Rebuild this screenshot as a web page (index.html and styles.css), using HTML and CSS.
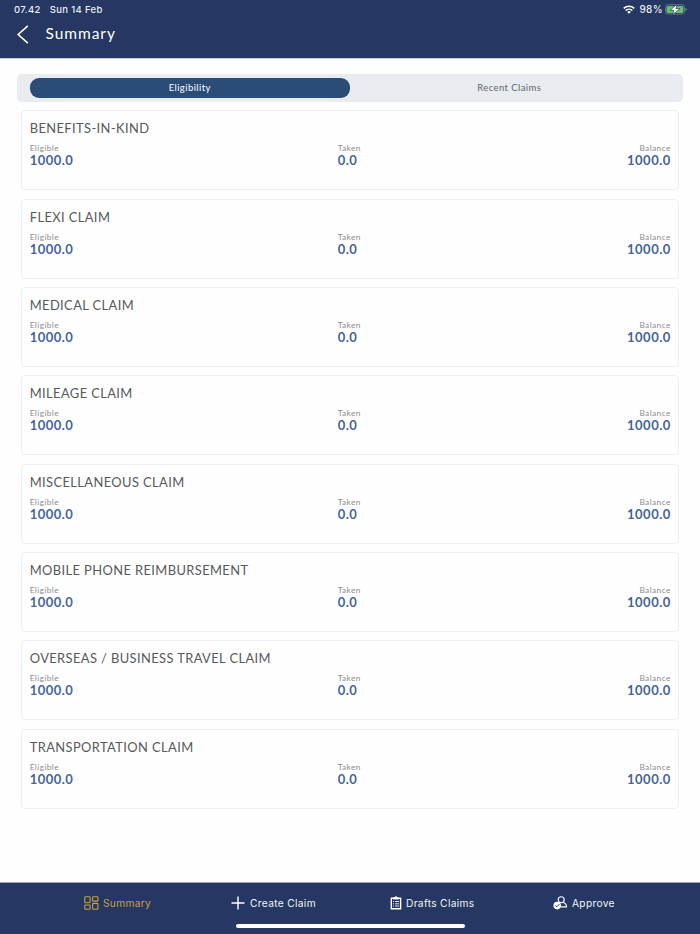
FILE: index.html
```html
<!DOCTYPE html>
<html lang="en">
<head>
<meta charset="utf-8">
<title>Summary</title>
<link rel="stylesheet" href="styles.css">
</head>
<body>
<div class="app">
  <header class="header">
    <div class="status">
      <span class="time">07.42</span><span class="date">Sun 14 Feb</span>
      <svg class="wifi" viewBox="0 0 12 9" width="12" height="9"><g fill="none" stroke="#fff" stroke-width="1.6"><path d="M.7 3.4a7.6 7.6 0 0 1 10.6 0"/><path d="M2.7 5.6a4.7 4.7 0 0 1 6.6 0"/></g><path d="M6 8.8 4.2 7a2.5 2.5 0 0 1 3.6 0z" fill="#fff"/></svg>
      <span class="percent">98%</span>
      <svg class="battery" viewBox="0 0 22 11" width="22" height="11"><rect x=".5" y=".7" width="19" height="9.4" rx="2.7" fill="none" stroke="#6b7894"/><rect x="1.6" y="1.9" width="16.8" height="7" rx="1.6" fill="#62c466"/><path d="M20.6 4v3q1-.4 1-1.5T20.6 4z" fill="#8c97af"/><path d="M12 .2 5 6.3h3.8L7.6 10.8 15 4.7h-3.8z" fill="#fff" stroke="#253762" stroke-width=".7"/></svg>
    </div>
    <div class="titlebar">
      <svg class="back" viewBox="0 0 12 19" width="12" height="19"><path d="M10.8.9 1.2 9.5l9.6 8.6" fill="none" stroke="#fff" stroke-width="1.6"/></svg>
      <h1>Summary</h1>
    </div>
  </header>
  <main class="content">
    <div class="tabs"><div class="tab active">Eligibility</div><div class="tab">Recent Claims</div></div>
    <div class="cards">
      <section class="card"><h2>BENEFITS-IN-KIND</h2><div class="figures"><div><small>Eligible</small><b>1000.0</b></div><div><small>Taken</small><b>0.0</b></div><div class="right"><small>Balance</small><b>1000.0</b></div></div></section>
      <section class="card"><h2>FLEXI CLAIM</h2><div class="figures"><div><small>Eligible</small><b>1000.0</b></div><div><small>Taken</small><b>0.0</b></div><div class="right"><small>Balance</small><b>1000.0</b></div></div></section>
      <section class="card"><h2>MEDICAL CLAIM</h2><div class="figures"><div><small>Eligible</small><b>1000.0</b></div><div><small>Taken</small><b>0.0</b></div><div class="right"><small>Balance</small><b>1000.0</b></div></div></section>
      <section class="card"><h2>MILEAGE CLAIM</h2><div class="figures"><div><small>Eligible</small><b>1000.0</b></div><div><small>Taken</small><b>0.0</b></div><div class="right"><small>Balance</small><b>1000.0</b></div></div></section>
      <section class="card"><h2>MISCELLANEOUS CLAIM</h2><div class="figures"><div><small>Eligible</small><b>1000.0</b></div><div><small>Taken</small><b>0.0</b></div><div class="right"><small>Balance</small><b>1000.0</b></div></div></section>
      <section class="card"><h2>MOBILE PHONE REIMBURSEMENT</h2><div class="figures"><div><small>Eligible</small><b>1000.0</b></div><div><small>Taken</small><b>0.0</b></div><div class="right"><small>Balance</small><b>1000.0</b></div></div></section>
      <section class="card"><h2>OVERSEAS / BUSINESS TRAVEL CLAIM</h2><div class="figures"><div><small>Eligible</small><b>1000.0</b></div><div><small>Taken</small><b>0.0</b></div><div class="right"><small>Balance</small><b>1000.0</b></div></div></section>
      <section class="card"><h2>TRANSPORTATION CLAIM</h2><div class="figures"><div><small>Eligible</small><b>1000.0</b></div><div><small>Taken</small><b>0.0</b></div><div class="right"><small>Balance</small><b>1000.0</b></div></div></section>
    </div>
  </main>
  <nav class="nav">
    <a class="item summary"><svg viewBox="0 0 15 14" width="15" height="14"><g fill="none" stroke="#c9a03d" stroke-width="1.1"><rect x=".8" y=".7" width="5.3" height="6" rx=".7"/><rect x="8.6" y=".7" width="5.3" height="4.4" rx=".7"/><rect x=".8" y="9" width="5.3" height="4.2" rx=".7"/><rect x="8.6" y="7.4" width="5.3" height="5.8" rx=".7"/></g></svg><span>Summary</span></a>
    <a class="item create"><svg viewBox="0 0 14 14" width="14" height="14"><path d="M7 .5v13M.5 7h13" stroke="#fff" stroke-width="1.4"/></svg><span>Create Claim</span></a>
    <a class="item drafts"><svg viewBox="0 0 12 14" width="12" height="14"><path d="M1.3 2.3h9.3v10.5H1.3z" fill="none" stroke="#fff" stroke-width="1.4"/><path d="M3.4 1.3h1.3a1.3 1.3 0 0 1 2.5 0h1.3v2.2H3.4z" fill="#fff"/><path d="M3 5.5h1M5 5.5h3.9M3 7.8h1M5 7.8h3.9M3 10h1M5 10h3.9" stroke="#dfe3eb"/></svg><span>Drafts Claims</span></a>
    <a class="item approve"><svg viewBox="0 0 15 14" width="15" height="14"><g fill="none" stroke="#fff" stroke-width="1.1"><circle cx="8.2" cy="3.8" r="3"/><path d="M5.2 7.2 3.7 8M10.2 6.4c2.2.7 3.3 2.2 3.4 4.5H8"/></g><circle cx="4.2" cy="9.6" r="3.8" fill="#fff"/><path d="m2.2 9.4 1.5 1.5 2.7-2.8" fill="none" stroke="#253762" stroke-width="1"/></svg><span>Approve</span></a>
    <div class="home"></div>
  </nav>
</div>
</body>
</html>
```
FILE: styles.css
```css
* { box-sizing: border-box; }
body { margin: 0; font-family: Lato, sans-serif; background: #253762; }
.app { width: 700px; height: 934px; display: flex; flex-direction: column; overflow: hidden; }
.header { height: 58px; background: #253762; color: #fff; }
.status { display: flex; align-items: center; height: 19px; padding: 0 13px 0 14px; font: 500 9.5px/19px Inter, sans-serif; letter-spacing: .33px; color: #e9ecf2; }
.date { margin-left: 9px; }
.wifi { margin-left: auto; }
.percent { margin: 0 2px 0 4px; font-size: 10px; }
.titlebar { display: flex; align-items: center; height: 30px; padding-left: 17px; }
h1 { margin: -2px 0 0 16.5px; font-weight: 400; font-size: 15.5px; letter-spacing: .95px; }
.content { flex: 1; min-height: 0; background: #fefefe; padding: 15px 17px 0; border-top: 1px solid #c9cdd6; }
.tabs { display: flex; height: 28px; padding: 4px 14px 4px 13px; border-radius: 5px; background: #e8ecf0; }
.tab { flex: 1; border-radius: 9px; text-align: center; color: #62666b; font-size: 9.5px; line-height: 19px; letter-spacing: .42px; }
.active { background: #2c4c78; color: #fff; }
.cards { display: flex; flex-direction: column; gap: 8.33px; padding: 8.3px 4px 0; }
.card { height: 80px; border: 1px solid #eeeff2; border-radius: 4px; padding: 9.2px 7.7px 0; }
h2 { margin: 0; font-size: 12.9px; line-height: 16px; font-weight: 400; color: #58595b; letter-spacing: .4px; white-space: nowrap; }
.figures { display: grid; grid-template-columns: 308px 1fr auto; margin-top: 7px; }
small { display: block; font-size: 8.3px; line-height: 10px; color: #8b8d90; letter-spacing: .42px; }
b { display: block; font-size: 13px; line-height: 15px; font-weight: 700; color: #466499; letter-spacing: .48px; }
.right { text-align: right; }
.right small, .right b { margin-right: -.45px; }
.nav { position: relative; height: 52px; display: flex; padding-left: 84px; background: #253762; border-top: 1px solid #9ca5b8; }
.item { display: flex; align-items: center; height: 40px; color: #f1f3f7; font: 400 10.2px Inter, sans-serif; letter-spacing: .33px; gap: 4px; }
.summary { width: 147px; color: #c9a03d; }
.create { width: 159px; }
.drafts { width: 163px; }
.create { gap: 5px; }
.home { position: absolute; left: 235.5px; bottom: 6px; width: 229px; height: 4.5px; border-radius: 2.5px; background: #fff; }
```
